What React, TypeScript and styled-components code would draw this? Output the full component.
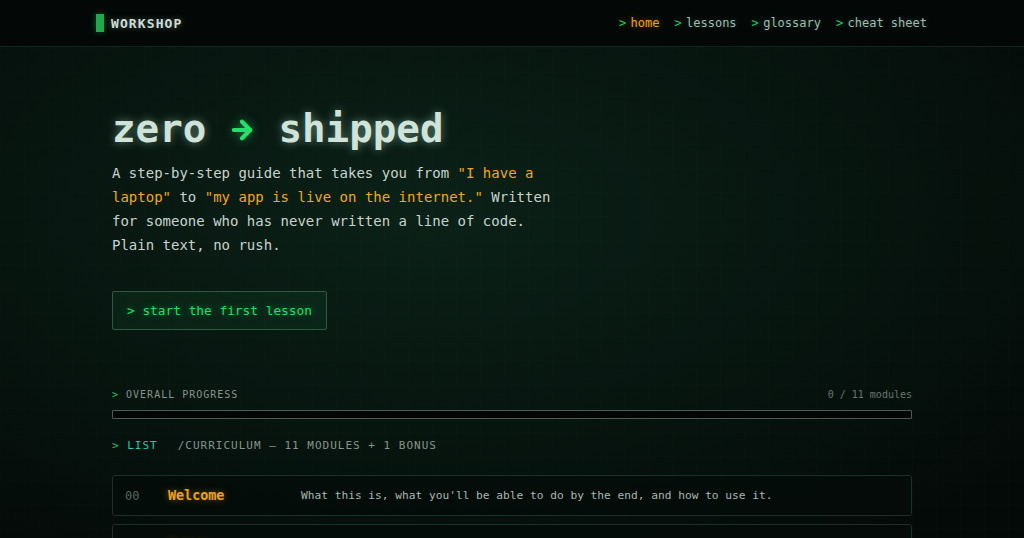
import React from "react"
import styled, { createGlobalStyle } from "styled-components"
import { ArrowRight } from "lucide-react"

const mono = `"DejaVu Sans Mono", "Liberation Mono", monospace`

const GlobalStyle = createGlobalStyle`
  html, body {
    margin: 0;
    padding: 0;
    background: #040a08;
  }
  body {
    font-family: ${mono};
    color: #c9d6cf;
    overflow: hidden;
  }
`

const Page = styled.div`
  min-height: 538px;
  background:
    linear-gradient(rgba(120, 255, 180, 0.008) 1px, transparent 1px) 0 0 / 100% 24px,
    linear-gradient(90deg, rgba(120, 255, 180, 0.008) 1px, transparent 1px) 0 0 / 24px 100%,
    radial-gradient(ellipse 75% 70% at 42% 38%, #0b2118 0%, #07150f 55%, #040a08 100%);
`

const Header = styled.header`
  height: 46px;
  background: #030806;
  border-bottom: 1px solid #12241d;
`

const HeaderInner = styled.div`
  max-width: 832px;
  height: 100%;
  margin: 0 auto;
  display: flex;
  align-items: center;
  justify-content: space-between;
`

const Brand = styled.div`
  display: flex;
  align-items: center;
  gap: 7px;
  font-size: 13px;
  font-weight: 700;
  letter-spacing: 1.1px;
  color: #cfdcd5;
  text-shadow: 0 0 6px rgba(200, 230, 215, 0.35);
`

const BrandMark = styled.span`
  width: 8px;
  height: 18px;
  background: #1fa84e;
  box-shadow: 0 0 6px rgba(31, 200, 90, 0.4);
`

const Nav = styled.nav`
  display: flex;
  gap: 15px;
  font-size: 12px;
  margin-right: 1px;
`

const NavItem = styled.a<{ $active?: boolean }>`
  color: ${(p) => (p.$active ? "#f0a31c" : "#9fbcb0")};
  text-decoration: none;
  text-shadow: 0 0 6px ${(p) => (p.$active ? "rgba(240,163,28,0.45)" : "rgba(160,200,185,0.3)")};
`

const Prompt = styled.span`
  color: #22c866;
  margin-right: 0.6ch;
`

const Main = styled.main`
  max-width: 800px;
  margin: 0 auto;
  padding-top: 58px;
`

const Title = styled.h1`
  margin: 0;
  display: flex;
  align-items: center;
  gap: 22px;
  font-size: 39.2px;
  line-height: 47px;
  font-weight: 700;
  color: #cfe3d8;
  text-shadow: 0 0 10px rgba(190, 235, 215, 0.45);
`

const ArrowMark = styled(ArrowRight)`
  color: #22e06a;
  filter: drop-shadow(0 0 5px rgba(34, 224, 106, 0.55));
  margin-top: 2px;
`

const Lead = styled.p`
  margin: 9px 0 0;
  max-width: 450px;
  font-size: 14px;
  line-height: 24px;
  color: #c7d3cc;
`

const Quote = styled.span`
  color: #f0a81e;
`

const StartButton = styled.a`
  display: inline-flex;
  align-items: center;
  margin-top: 34px;
  height: 39px;
  box-sizing: border-box;
  padding: 0 14px;
  border: 1px solid #2c5a42;
  border-radius: 2px;
  background: rgba(30, 120, 70, 0.12);
  color: #27dc68;
  font-size: 12.8px;
  text-decoration: none;
  text-shadow: 0 0 7px rgba(39, 220, 104, 0.5);
`

const SectionHead = styled.div<{ $gap: number; $size: number }>`
  display: flex;
  align-items: center;
  justify-content: space-between;
  margin-top: ${(p) => p.$gap}px;
  font-size: ${(p) => p.$size}px;
  line-height: 14px;
  letter-spacing: 1px;
  color: #85948d;
`

const Label = styled.span`
  display: flex;
  gap: 20px;
`

const Accent = styled.span<{ $tone: "green" | "teal" }>`
  color: ${(p) => (p.$tone === "teal" ? "#2ec4ad" : "#22c866")};
`

const Count = styled.span`
  letter-spacing: 0;
  color: #67766f;
`

const ProgressTrack = styled.div`
  margin-top: 8px;
  height: 9px;
  box-sizing: border-box;
  border: 1px solid #4c5c55;
  border-radius: 1px;
  background: #020605;
`

const ProgressFill = styled.div`
  height: 100%;
  background: #22c866;
`

const ModuleList = styled.ul`
  list-style: none;
  margin: 22px 0 0;
  padding: 0;
  display: flex;
  flex-direction: column;
  gap: 8px;
`

const ModuleRow = styled.li`
  display: grid;
  grid-template-columns: 43px 133px 1fr;
  align-items: center;
  height: 41px;
  box-sizing: border-box;
  padding: 0 12px;
  border: 1px solid #1c2f28;
  border-radius: 3px;
  background: rgba(4, 12, 9, 0.7);
`

const ModuleNum = styled.span`
  font-size: 12px;
  color: #56675f;
`

const ModuleName = styled.span`
  font-size: 13.4px;
  font-weight: 700;
  color: #eea21b;
  text-shadow: 0 0 7px rgba(238, 162, 27, 0.45);
`

const ModuleDesc = styled.span`
  font-size: 11.2px;
  color: #a9b6b0;
`

const modules = [
  { num: "00", name: "Welcome", desc: "What this is, what you'll be able to do by the end, and how to use it." },
  { num: "01", name: "Setup", desc: "Install the tools you need and open your first terminal." },
]

export default function App() {
  const done = 0
  const total = 11
  return (
    <>
      <GlobalStyle />
      <Page>
        <Header>
          <HeaderInner>
            <Brand>
              <BrandMark />
              WORKSHOP
            </Brand>
            <Nav>
              <NavItem $active><Prompt>&gt;</Prompt>home</NavItem>
              <NavItem><Prompt>&gt;</Prompt>lessons</NavItem>
              <NavItem><Prompt>&gt;</Prompt>glossary</NavItem>
              <NavItem><Prompt>&gt;</Prompt>cheat sheet</NavItem>
            </Nav>
          </HeaderInner>
        </Header>
        <Main>
          <Title>
            <span>zero</span>
            <ArrowMark size={28} strokeWidth={3.6} aria-label="to" />
            <span>shipped</span>
          </Title>
          <Lead>
            A step-by-step guide that takes you from <Quote>"I have a laptop"</Quote> to{" "}
            <Quote>"my app is live on the internet."</Quote> Written for someone who has never
            written a line of code. Plain text, no rush.
          </Lead>
          <StartButton>&gt; start the first lesson</StartButton>

          <SectionHead $gap={58} $size={10}>
            <Label>
              <span><Accent $tone="green">&gt;</Accent> OVERALL PROGRESS</span>
            </Label>
            <Count>{done} / {total} modules</Count>
          </SectionHead>
          <ProgressTrack>
            <ProgressFill style={{ width: `${(done / total) * 100}%` }} />
          </ProgressTrack>

          <SectionHead $gap={20} $size={11}>
            <Label>
              <span><Accent $tone="green">&gt;</Accent> <Accent $tone="teal">LIST</Accent></span>
              <span>/CURRICULUM — 11 MODULES + 1 BONUS</span>
            </Label>
          </SectionHead>

          <ModuleList>
            {modules.map((m) => (
              <ModuleRow key={m.num}>
                <ModuleNum>{m.num}</ModuleNum>
                <ModuleName>{m.name}</ModuleName>
                <ModuleDesc>{m.desc}</ModuleDesc>
              </ModuleRow>
            ))}
          </ModuleList>
        </Main>
      </Page>
    </>
  )
}
